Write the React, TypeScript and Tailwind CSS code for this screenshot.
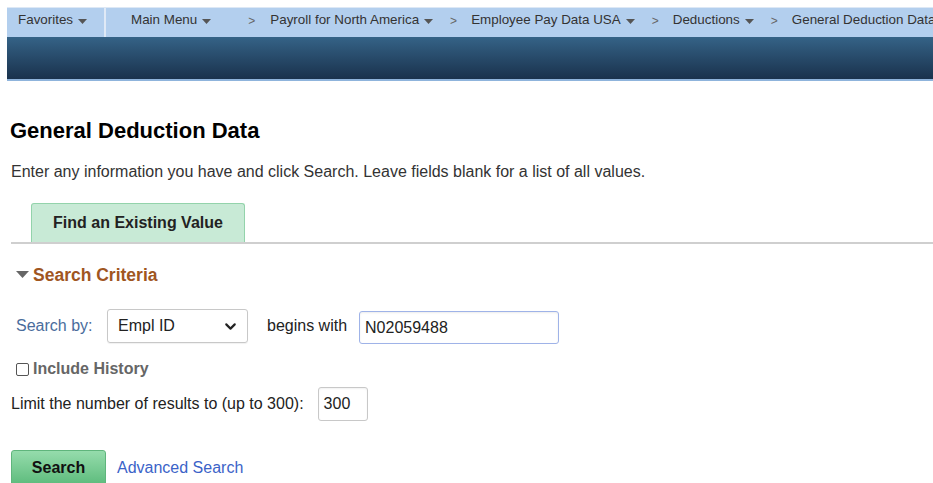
import { ChevronDown } from "lucide-react";

// ── NavCrumb ────────────────────────────────────────────────────────────────
function Caret() {
  return (
    <svg width="9" height="5" viewBox="0 0 9 5" className="ml-[5px] mt-[2px] shrink-0">
      <path d="M0 0H9L4.5 5Z" fill="#555" />
    </svg>
  );
}

function Sep() {
  return <span className="text-[#666] text-[12px] pl-[17px] pr-[14px]">&gt;</span>;
}

function NavBar() {
  return (
    <div className="pl-[7px] pt-[7px]">
      <div className="flex h-[30px] bg-[#b3cfee] text-[13.4px] text-[#333] border-t border-[#dde8f5] overflow-hidden">
        <div className="flex items-center shrink-0 pb-[4px] pl-[11px] w-[99px] border-r-2 border-[#dfe9f6]">
          Favorites
          <Caret />
        </div>
        <div className="flex items-center pb-[4px] pl-[25px] whitespace-nowrap">
          Main Menu
          <Caret />
          <span className="w-[37px]" />
          <span className="text-[#666] text-[12px]">&gt;</span>
          <span className="w-[15px]" />
          Payroll for North America
          <Caret />
          <Sep />
          Employee Pay Data USA
          <Caret />
          <Sep />
          Deductions
          <Caret />
          <Sep />
          General Deduction Data
        </div>
      </div>
      <div className="h-[44px] bg-gradient-to-b from-[#356387] to-[#1a324d] border-b-2 border-[#8fb4dc]" />
    </div>
  );
}

// ── Search page ─────────────────────────────────────────────────────────────
export default function App() {
  return (
    <div
      className="w-[933px] h-[483px] overflow-hidden bg-white text-[#333]"
      style={{ fontFamily: '"Liberation Sans", Arial, sans-serif' }}
    >
      <NavBar />

      <h1 className="mt-[39px] ml-[10px] text-[22px] font-bold text-black leading-[22px]">
        General Deduction Data
      </h1>
      <p className="mt-[21px] ml-[11px] text-[16px] leading-[18px]">
        Enter any information you have and click Search. Leave fields blank for a list of all values.
      </p>

      {/* Tab strip */}
      <div className="mt-[22px] ml-[11px] border-b-2 border-[#cfcfcf] flex">
        <div className="ml-[20px] w-[214px] h-[39px] bg-[#c8ead6] border border-b-0 border-[#93d3ab] rounded-t-[3px] flex items-center justify-center text-[16px] font-bold text-[#222]">
          Find an Existing Value
        </div>
      </div>

      {/* Search Criteria */}
      <div className="mt-[21px] ml-[16px] flex items-center h-[20px]">
        <svg width="13" height="8" viewBox="0 0 13 8">
          <path d="M0 0H13L6.5 7Z" fill="#666" />
        </svg>
        <span className="ml-[4px] text-[17.5px] font-bold text-[#a0561f]">Search Criteria</span>
      </div>

      <div className="mt-[23px] ml-[16px] flex items-center text-[16px]">
        <span className="text-[#4a6c9c] w-[91px]">Search by:</span>
        <div className="w-[141px] h-[34px] border border-[#c8c8c8] rounded-[3px] flex items-center justify-between pl-[10px] pr-[8px] text-[#222] shadow-[0_1px_1px_rgba(0,0,0,0.06)]">
          <span>Empl ID</span>
          <ChevronDown size={17} strokeWidth={3} color="#222" />
        </div>
        <span className="ml-[19px] text-[#222]">begins with</span>
        <div className="ml-[12px] mt-[3px] w-[200px] h-[33px] border border-[#9fb3e8] rounded-[3px] flex items-center pl-[5px] text-[#222] shadow-[inset_0_1px_2px_rgba(0,0,0,0.08)]">
          N02059488
        </div>
      </div>

      <label className="mt-[16px] ml-[16px] flex items-center h-[18px]">
        <span className="w-[13px] h-[13px] border border-[#555] rounded-[2px] bg-white" />
        <span className="ml-[4px] text-[16px] font-bold text-[#666]">Include History</span>
      </label>

      <div className="mt-[9px] ml-[11px] flex items-center text-[16px] text-[#222]">
        <span>Limit the number of results to (up to 300):</span>
        <div className="ml-[14px] w-[50px] h-[34px] border border-[#c8c8c8] rounded-[3px] flex items-center pl-[5px] shadow-[inset_0_1px_2px_rgba(0,0,0,0.06)]">
          300
        </div>
      </div>

      <div className="mt-[29px] ml-[11px] flex items-center">
        <div className="w-[95px] h-[36px] rounded-[3px] border border-[#5fb57c] bg-gradient-to-b from-[#95dcac] to-[#5cbb7c] flex items-center justify-center text-[16px] font-bold text-[#111]">
          Search
        </div>
        <span className="ml-[11px] text-[16px] text-[#3b63c8]">Advanced Search</span>
      </div>
    </div>
  );
}
